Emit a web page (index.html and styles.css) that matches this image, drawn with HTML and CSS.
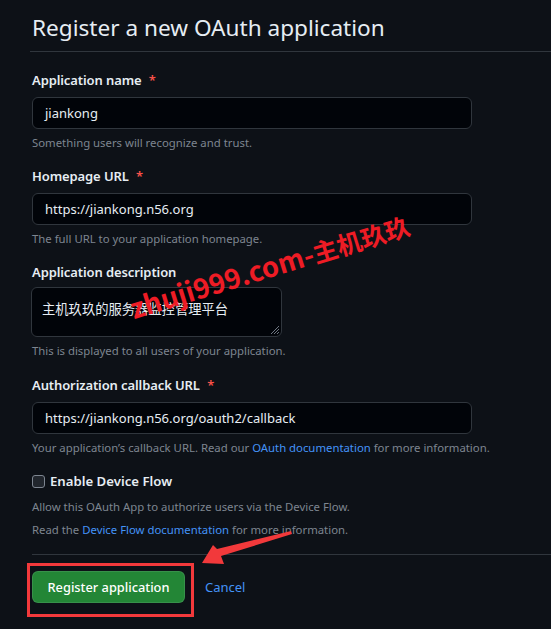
FILE: index.html
```html
<!DOCTYPE html>
<html>
<head>
<meta charset="utf-8">
<link rel="stylesheet" href="styles.css">
</head>
<body>
<div class="page">
  <h1 class="title">Register a new OAuth application</h1>
  <form class="form">
    <div class="group">
      <label class="label">Application name <span class="req">*</span></label>
      <div class="input">jiankong</div>
      <p class="note">Something users will recognize and trust.</p>
    </div>
    <div class="group">
      <label class="label">Homepage URL <span class="req">*</span></label>
      <div class="input">https://jiankong.n56.org</div>
      <p class="note">The full URL to your application homepage.</p>
    </div>
    <div class="group group-desc">
      <label class="label">Application description</label>
      <div class="textarea">主机玖玖的服务器监控管理平台
        <svg class="grip" width="12" height="12" viewBox="0 0 12 12"><path d="M11 3 L3 11 M11 6 L6 11 M11 9 L9 11" stroke="#6e7681" stroke-width="1"/></svg>
      </div>
      <p class="note">This is displayed to all users of your application.</p>
    </div>
    <div class="group">
      <label class="label">Authorization callback URL <span class="req">*</span></label>
      <div class="input">https://jiankong.n56.org/oauth2/callback</div>
      <p class="note">Your application’s callback URL. Read our <a class="link">OAuth documentation</a> for more information.</p>
    </div>
    <div class="group check-group">
      <label class="check-label"><span class="checkbox"></span>Enable Device Flow</label>
      <p class="note">Allow this OAuth App to authorize users via the Device Flow.</p>
      <p class="note note2">Read the <a class="link">Device Flow documentation</a> for more information.</p>
    </div>
    <div class="actions">
      <button type="button" class="btn">Register application</button>
      <a class="link cancel">Cancel</a>
    </div>
  </form>
</div>
<div class="watermark"><span class="wm-latin">zhuji999.com-</span><span class="wm-cjk">主机玖玖</span></div>
<svg class="annot" width="551" height="629" viewBox="0 0 551 629">
  <rect x="28.5" y="564.5" width="164" height="51" fill="none" stroke="#f2393b" stroke-width="3"/>
  <polygon points="202,563 213,545 217,549 291,531 292,534 221,556 224,564" fill="#f2393b"/>
</svg>
</body>
</html>
```
FILE: styles.css
```css
html, body {
  margin: 0;
  padding: 0;
  background: #0d1117;
}
body {
  width: 551px;
  height: 629px;
  overflow: hidden;
  position: relative;
  font-family: "Noto Sans", "Noto Sans CJK SC", sans-serif;
  color: #e6edf3;
}
.page {
  padding-left: 30px;
}
.title {
  margin: 0;
  padding: 12px 0 8px 2px;
  font-size: 22.6px;
  line-height: 31px;
  font-weight: 400;
  color: #e6edf3;
  border-bottom: 1px solid #30363d;
}
.form {
  padding-left: 2px;
  padding-top: 18px;
}
.group {
  margin-bottom: 14px;
}
.group-desc {
  margin-bottom: 15px;
}
.label {
  display: block;
  font-size: 13px;
  letter-spacing: -0.1px;
  line-height: 21px;
  font-weight: 600;
  margin-bottom: 6px;
}
.req {
  color: #f85149;
  margin-left: 4px;
}
.input {
  box-sizing: border-box;
  width: 440px;
  height: 32px;
  border: 1px solid #30363d;
  border-radius: 6px;
  background: #010409;
  padding: 0 12px;
  font-size: 13px;
  line-height: 30px;
  color: #e6edf3;
}
.textarea {
  position: relative;
  box-sizing: border-box;
  width: 251px;
  height: 50px;
  margin-top: -2px;
  margin-left: -1px;
  border: 1px solid #30363d;
  border-radius: 6px;
  background: #010409;
  padding: 12px 10px 0;
  font-family: "Noto Sans CJK SC", sans-serif;
  font-size: 13.3px;
  line-height: 18px;
  color: #e6edf3;
}
.grip {
  position: absolute;
  right: 1px;
  bottom: 1px;
}
.note {
  margin: 5px 0 0;
  font-size: 11.35px;
  line-height: 18px;
  color: #7d8590;
}
.note2 {
  margin-top: 5px;
}
.link {
  color: #4493f8;
  text-decoration: none;
}
.check-group {
  margin-bottom: 15px;
}
.check-label {
  display: flex;
  align-items: center;
  font-size: 13.2px;
  line-height: 21px;
  font-weight: 600;
  margin-bottom: 6px;
}
.checkbox {
  box-sizing: border-box;
  width: 13px;
  height: 13px;
  border: 1px solid #7d8590;
  border-radius: 3px;
  background: #21262d;
  margin-right: 5px;
}
.actions {
  display: flex;
  align-items: center;
  gap: 20px;
  border-top: 1px solid #30363d;
  padding-top: 16px;
}
.btn {
  box-sizing: border-box;
  height: 32px;
  width: 153px;
  padding: 0;
  white-space: nowrap;
  background: #238636;
  border: 1px solid rgba(240, 246, 252, 0.1);
  border-radius: 6px;
  color: #ffffff;
  font-family: "Noto Sans", sans-serif;
  font-size: 12.8px;
  font-weight: 500;
}
.cancel {
  font-size: 13px;
}
.watermark {
  position: absolute;
  left: 136px;
  top: 292px;
  font-family: "Noto Sans CJK SC", sans-serif;
  font-weight: 700;
  line-height: 30px;
  color: #ee1c25;
  white-space: nowrap;
  transform: rotate(-17deg);
  transform-origin: 0 100%;
}
.wm-latin {
  font-size: 27.5px;
}
.wm-cjk {
  font-size: 25px;
}
.annot {
  position: absolute;
  left: 0;
  top: 0;
  pointer-events: none;
}
```
